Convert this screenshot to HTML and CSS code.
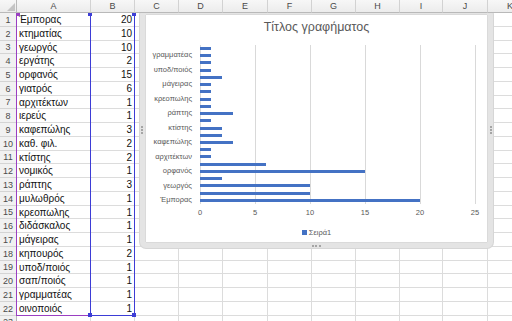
FILE: index.html
```html
<!DOCTYPE html>
<html lang="el">
<head>
  <meta charset="UTF-8">
  <meta name="viewport" content="width=device-width, initial-scale=1.0">
  <title>Βιβλίο1 - Excel</title>
  <link rel="stylesheet" href="styles.css">
</head>
<body>
  <div class="sheet">
    <div class="col-headers cols" id="colHeaders"></div>

    <div class="sheet-body">
      <div class="grid cols" id="grid"></div>

      <!-- data range highlight -->
      <div class="range range-a"></div>
      <div class="range range-b"></div>
      <span class="handle handle-purple" style="left:16px; top:-1px"></span>
      <span class="handle" style="left:88px; top:-1px"></span>
      <span class="handle" style="left:132px; top:-1px"></span>
      <span class="handle" style="left:88px; top:300px"></span>
      <span class="handle" style="left:132px; top:300px"></span>

      <div class="chart">
        <div class="chart-title">Τίτλος γραφήματος</div>
        <div class="plot-row">
          <div class="cat-labels" id="catLabels"></div>
          <div class="plot" id="plot"></div>
        </div>
        <div class="axis">
          <span>0</span><span>5</span><span>10</span><span>15</span><span>20</span><span>25</span>
        </div>
        <div class="legend"><span class="legend-key"></span>Σειρά1</div>

        <span class="grip grip-left"></span>
        <span class="grip grip-right"></span>
        <span class="grip grip-bottom"></span>
      </div>
    </div>
  </div>

  <script>
    const dados = [
      ['Έμπορας', 20], ['κτηματίας', 10], ['γεωργός', 10], ['εργάτης', 2],
      ['ορφανός', 15], ['γιατρός', 6], ['αρχιτέκτων', 1], ['ιερεύς', 1],
      ['καφεπώλης', 3], ['καθ. φιλ.', 2], ['κτίστης', 2], ['νομικός', 1],
      ['ράπτης', 3], ['μυλωθρός', 1], ['κρεοπωλης', 1], ['διδάσκαλος', 1],
      ['μάγειρας', 1], ['κηπουρός', 2], ['υποδ/ποιός', 1], ['σαπ/ποιός', 1],
      ['γραμματέας', 1], ['οινοποιός', 1]
    ];
    const colunas = ['A', 'B', 'C', 'D', 'E', 'F', 'G', 'H', 'I', 'J', 'K'];

    // column headers
    const colHeaders = document.getElementById('colHeaders');
    colHeaders.innerHTML = '<div class="head-cell corner"></div>' +
      colunas.map(c => `<div class="head-cell">${c}</div>`).join('');

    // cells
    const grid = document.getElementById('grid');
    let html = '';
    for (let r = 1; r <= 23; r++) {
      const linha = dados[r - 1];
      html += `<div class="cell rownum">${r}</div>`;
      html += `<div class="cell">${linha ? linha[0] : ''}</div>`;
      html += `<div class="cell num">${linha ? linha[1] : ''}</div>`;
      for (let c = 2; c < colunas.length; c++) html += '<div class="cell"></div>';
    }
    grid.innerHTML = html;

    // chart bars and category labels (bottom to top)
    const plot = document.getElementById('plot');
    const catLabels = document.getElementById('catLabels');
    dados.forEach(([nome, valor], i) => {
      plot.innerHTML += `<div class="slot"><div class="bar" style="width:${valor * 11}px"></div></div>`;
      catLabels.innerHTML += `<span>${i % 2 === 0 ? nome : ''}</span>`;
    });
  </script>
</body>
</html>
```

FILE: styles.css
```css
* {
  box-sizing: border-box;
}
body {
  margin: 0;
  font-family: 'Liberation Sans', Arial, sans-serif;
  background-color: #fff;
  color: #111;
}
.sheet {
  width: 512px;
  height: 321px;
  overflow: hidden;
}
.cols {
  display: grid;
  grid-template-columns: 17px 74px 44px 44px 44px 45px 44px 44px 44px 43px 45px 45px;
}
.col-headers {
  height: 13px;
  position: relative;
  z-index: 2;
}
.head-cell {
  background: linear-gradient(#f7f7f7, #ececec);
  border-right: 1px solid #d2d2d2;
  border-bottom: 1px solid #b9b9b9;
  font-size: 9px;
  color: #4a4a4a;
  display: flex;
  align-items: center;
  justify-content: center;
}
.corner {
  position: relative;
  border-right-color: #b9b9b9;
}
.corner::after {
  content: '';
  position: absolute;
  right: 1px;
  bottom: 1px;
  border: 4px solid transparent;
  border-right-color: #c4c4c4;
  border-bottom-color: #c4c4c4;
}
.sheet-body {
  position: relative;
  height: 308px;
  overflow: hidden;
}
.grid {
  grid-template-rows: repeat(6, 14px 14px 13px 14px);
}
.cell {
  border-right: 1px solid #dcdcdc;
  border-bottom: 1px solid #dcdcdc;
  font-size: 10px;
  padding: 0 2px;
  display: flex;
  align-items: center;
  white-space: nowrap;
  overflow: hidden;
}
.rownum {
  background-color: #f1f1f1;
  border-right-color: #b9b9b9;
  border-bottom-color: #d4d4d4;
  justify-content: center;
  font-size: 9px;
  color: #4a4a4a;
  padding: 0;
}
.num {
  justify-content: flex-end;
}

/* data range */
.range {
  position: absolute;
  top: -1px;
  height: 304px;
  border: 1px solid #9a3fc2;
}
.range-a {
  left: 16px;
  width: 75px;
}
.range-b {
  left: 90px;
  width: 45px;
  border-color: #3d3dd6;
}
.handle {
  position: absolute;
  width: 4px;
  height: 4px;
  background-color: #3d3dd6;
}
.handle-purple {
  background-color: #9a3fc2;
}

/* chart */
.chart {
  position: absolute;
  left: 140px;
  top: -4px;
  width: 353px;
  height: 239px;
  border: 5px solid #e4e4e4;
  border-radius: 6px;
  background-color: #fff;
  box-shadow: 0 0 0 1px #d6d6d6, inset 0 0 0 1px #dadada;
  display: flex;
  flex-direction: column;
  color: #595959;
}
.chart-title {
  height: 31px;
  padding-top: 5px;
  text-align: center;
  font-size: 12.5px;
  line-height: 16px;
}
.plot-row {
  display: flex;
  gap: 8px;
  height: 159px;
}
.cat-labels {
  width: 47px;
  flex-shrink: 0;
  display: flex;
  flex-direction: column-reverse;
}
.cat-labels span {
  flex: 1;
  font-size: 7.5px;
  display: flex;
  align-items: center;
  justify-content: flex-end;
  white-space: nowrap;
}
.plot {
  width: 276px;
  flex-shrink: 0;
  display: flex;
  flex-direction: column-reverse;
  background-image: linear-gradient(to right, #d9d9d9 1px, transparent 1px);
  background-size: 55px 100%;
}
.slot {
  flex: 1;
  display: flex;
  align-items: center;
}
.bar {
  height: 3px;
  background-color: #4472c4;
}
.axis {
  display: flex;
  margin-left: 27.5px;
  height: 18px;
  line-height: 18px;
  font-size: 7.5px;
}
.axis span {
  width: 55px;
  flex-shrink: 0;
  text-align: center;
}
.legend {
  height: 20px;
  display: flex;
  justify-content: center;
  align-items: center;
  gap: 2px;
  font-size: 7.5px;
}
.legend-key {
  width: 5px;
  height: 5px;
  background-color: #4472c4;
}
.grip {
  position: absolute;
}
.grip-left {
  left: -4px;
  top: 112px;
  height: 8px;
  border-left: 2px dotted #a5a5a5;
}
.grip-right {
  right: -4px;
  top: 112px;
  height: 8px;
  border-right: 2px dotted #a5a5a5;
}
.grip-bottom {
  bottom: -4px;
  left: 167px;
  width: 9px;
  border-bottom: 2px dotted #a5a5a5;
}
```
